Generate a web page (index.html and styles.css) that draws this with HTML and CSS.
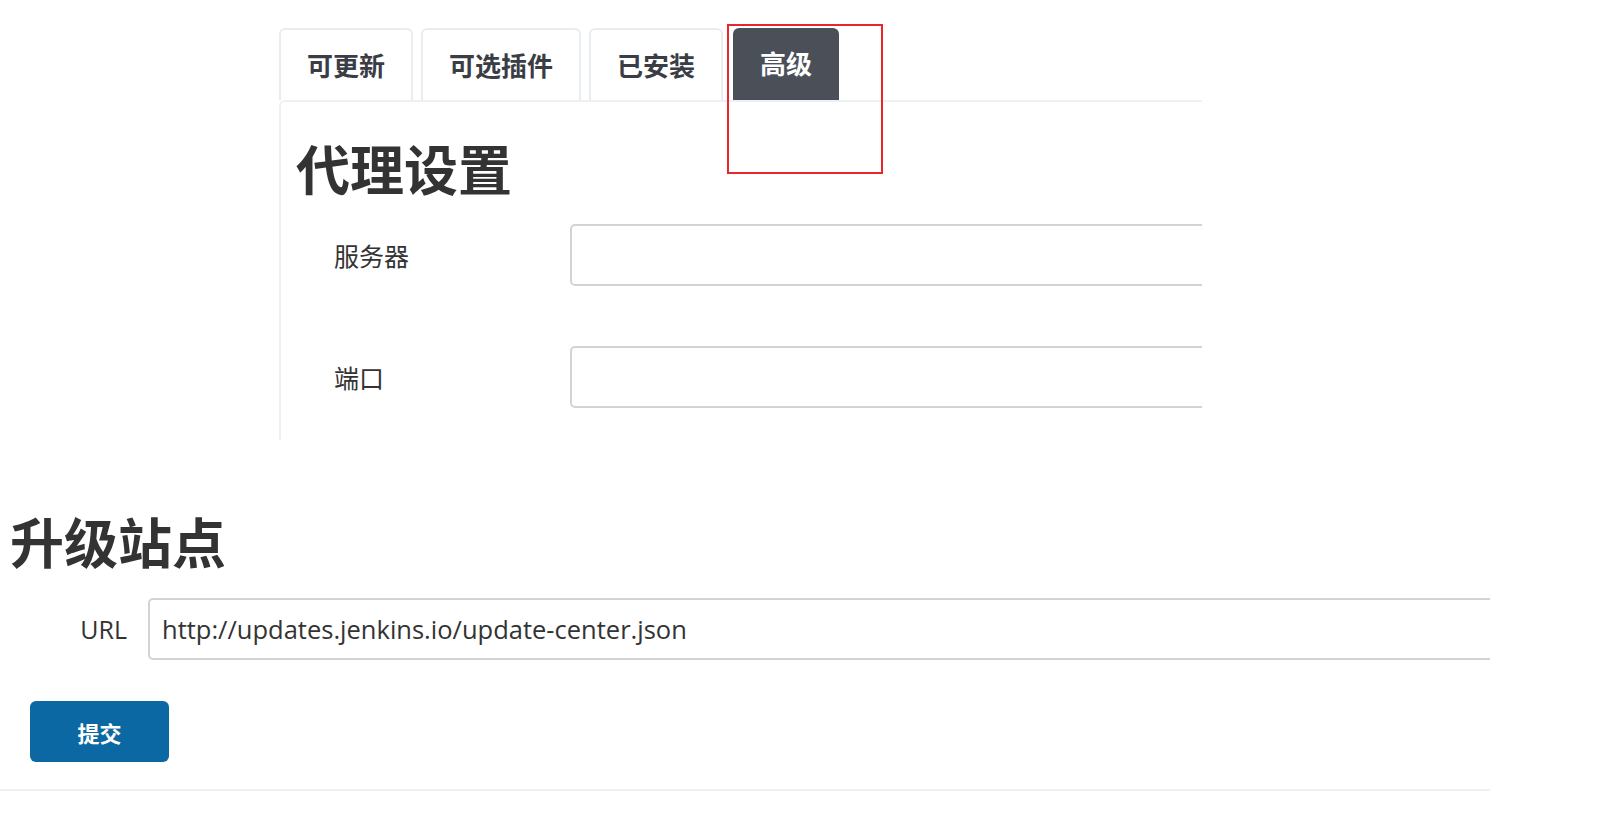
FILE: index.html
```html
<!DOCTYPE html>
<html lang="zh-CN">
<head>
    <meta charset="UTF-8">
    <meta name="viewport" content="width=device-width, initial-scale=1.0">
    <title>插件管理 - 高级</title>
    <link rel="stylesheet" href="styles.css">
</head>
<body>
    <!-- 上半部分：标签页 + 代理设置 -->
    <div class="top-shot">
        <div class="tabs">
            <div class="tab">可更新</div>
            <div class="tab">可选插件</div>
            <div class="tab">已安装</div>
            <div class="tab active">高级</div>
        </div>
        <div class="panel">
            <h1>代理设置</h1>
            <div class="form-row">
                <label for="proxy_server">服务器</label>
                <input type="text" id="proxy_server" name="server">
            </div>
            <div class="form-row">
                <label for="proxy_port">端口</label>
                <input type="text" id="proxy_port" name="port">
            </div>
        </div>
        <div class="highlight"></div>
    </div>

    <!-- 下半部分：升级站点 -->
    <form class="site-form" action="#" method="POST">
        <h1>升级站点</h1>
        <div class="url-row">
            <label for="site_url">URL</label>
            <input type="text" id="site_url" name="site" value="http://updates.jenkins.io/update-center.json">
        </div>
        <button type="submit" class="submit-btn">提交</button>
    </form>
</body>
</html>
```

FILE: styles.css
```css
* {
    margin: 0;
    padding: 0;
    box-sizing: border-box;
}

body {
    font-family: "Open Sans", "Noto Sans CJK SC", sans-serif;
    background-color: #fff;
    color: #333;
    width: 1598px;
    height: 819px;
    overflow: hidden;
}

h1 {
    font-family: "Noto Sans CJK SC", sans-serif;
    font-size: 54px;
    font-weight: 700;
    line-height: 65px;
    color: #333;
}

/* 上半部分截图 */
.top-shot {
    position: relative;
    margin-left: 279px;
    padding-top: 28px;
    width: 923px;
    height: 440px;
    overflow: hidden;
}

.tabs {
    display: flex;
    gap: 8px;
}

.tab {
    height: 72px;
    padding: 0 26px;
    border: 2px solid #e9edf1;
    border-bottom: none;
    border-radius: 6px 6px 0 0;
    font-family: "Noto Sans CJK SC", sans-serif;
    font-size: 26px;
    font-weight: 700;
    line-height: 70px;
    color: #3a3d44;
}

.tab.active {
    margin-left: 2px;
    padding: 0 27px;
    border: none;
    background: #4b5058;
    color: #fff;
}

.panel {
    width: 1400px;
    height: 400px;
    padding: 33px 0 0 15px;
    border-top: 2px solid #eef1f4;
    border-left: 2px solid #eef1f4;
    border-top-left-radius: 6px;
}

.panel h1 {
    margin-bottom: 24px;
}

.form-row {
    display: flex;
    align-items: center;
    margin-bottom: 60px;
}

.form-row label {
    width: 274px;
    padding-left: 38px;
    font-family: "Noto Sans CJK SC", sans-serif;
    font-size: 25px;
    color: #333;
}

.form-row input {
    width: 900px;
    height: 62px;
    border: 2px solid #d3d3d3;
    border-radius: 5px;
    background: #fff;
}

.highlight {
    position: absolute;
    left: 448px;
    top: 24px;
    width: 156px;
    height: 150px;
    border: 2px solid #e8262b;
}

/* 下半部分：升级站点 */
.site-form {
    width: 1490px;
    height: 283px;
    margin-top: 68px;
    padding-left: 10px;
    border-bottom: 2px solid #eef1f4;
}

.url-row {
    display: flex;
    align-items: center;
    margin-top: 25px;
    overflow: hidden;
}

.url-row label {
    flex: none;
    width: 138px;
    padding-right: 21px;
    text-align: right;
    font-size: 25px;
    color: #333;
}

.url-row input {
    flex: none;
    width: 1400px;
    height: 62px;
    padding-left: 12px;
    border: 2px solid #d3d3d3;
    border-radius: 5px;
    font-family: "Open Sans", sans-serif;
    font-size: 25.5px;
    color: #333;
}

.submit-btn {
    display: block;
    width: 139px;
    height: 61px;
    margin: 41px 0 0 20px;
    border: none;
    border-radius: 6px;
    background: #0c68a2;
    color: #fff;
    font-family: "Noto Sans CJK SC", sans-serif;
    font-size: 22px;
    font-weight: 700;
    cursor: pointer;
}
```
